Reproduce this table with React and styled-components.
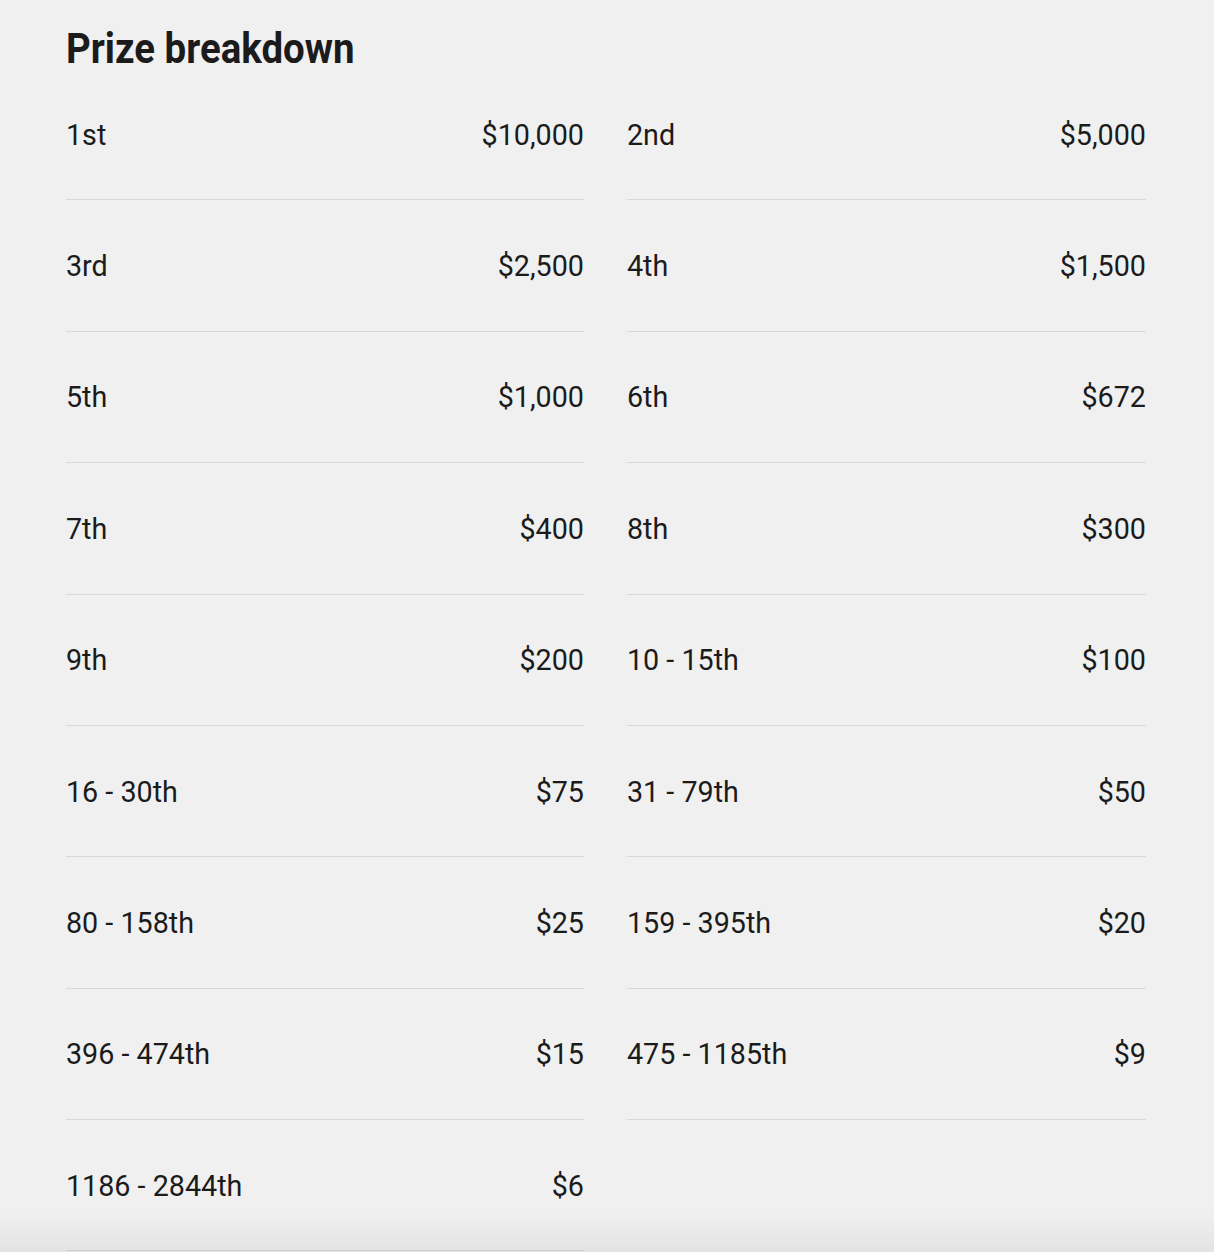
import React from "react";
import styled, { createGlobalStyle } from "styled-components";

const prizes = [
    ["1st", "$10,000"], ["2nd", "$5,000"],
    ["3rd", "$2,500"], ["4th", "$1,500"],
    ["5th", "$1,000"], ["6th", "$672"],
    ["7th", "$400"], ["8th", "$300"],
    ["9th", "$200"], ["10 - 15th", "$100"],
    ["16 - 30th", "$75"], ["31 - 79th", "$50"],
    ["80 - 158th", "$25"], ["159 - 395th", "$20"],
    ["396 - 474th", "$15"], ["475 - 1185th", "$9"],
    ["1186 - 2844th", "$6"],
];

export default function App(){
    return(
        <>
            <GlobalStyle/>
            <Page>
                <Title><span>Prize breakdown</span></Title>
                <PrizeGrid>
                    {prizes.map(([place, amount]) => (
                        <PrizeRow key={place}>
                            <span>{place}</span>
                            <span>{amount}</span>
                        </PrizeRow>
                    ))}
                </PrizeGrid>
            </Page>
            <BottomFade/>
        </>
    )
}

const GlobalStyle = createGlobalStyle`
    html, body{
        margin: 0;
        background: #f0f0f0;
    }
    body{
        font-family: Roboto, "Liberation Sans", sans-serif;
        color: #1b1b1b;
    }
`

const Page = styled.div`
    padding: 0 68px 0 66px;
    height: 1252px;
    box-sizing: border-box;
    overflow: hidden;
`

const Title = styled.h1`
    margin: 0;
    height: 69px;
    padding-top: 25px;
    box-sizing: border-box;
    font-size: 42px;
    line-height: 48px;
    font-weight: 700;
    color: #1b1b1b;
    span{
        display: inline-block;
        transform: scaleX(0.915);
        transform-origin: left center;
    }
`

const PrizeGrid = styled.div`
    display: grid;
    grid-template-columns: 518px 519px;
    column-gap: 43px;
`

const PrizeRow = styled.div`
    height: 131.375px;
    box-sizing: border-box;
    border-bottom: 1px solid #d9d9d9;
    display: flex;
    align-items: center;
    justify-content: space-between;
    font-size: 28.7px;
    padding-top: 1px;
`

const BottomFade = styled.div`
    position: fixed;
    left: 0;
    right: 0;
    bottom: 0;
    height: 40px;
    background: linear-gradient(to bottom, rgba(0,0,0,0), rgba(0,0,0,0.05));
    pointer-events: none;
`
